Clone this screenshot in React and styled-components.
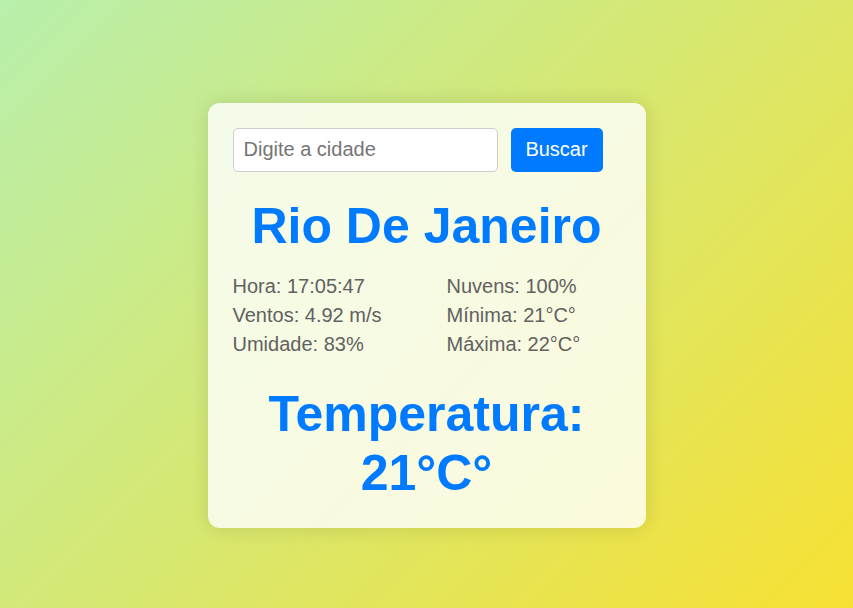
import React, { useState } from "react";
import styled, { createGlobalStyle } from "styled-components";

const GlobalStyle = createGlobalStyle`
  html, body { margin: 0; padding: 0; }
  body {
    font-family: "Liberation Sans", Arial, sans-serif;
    background: linear-gradient(135deg, #b8efac 0%, #f7e033 100%);
    min-height: 100vh;
  }
`;

const Page = styled.div`
  min-height: 100vh;
  box-sizing: border-box;
  display: flex;
  justify-content: center;
  align-items: center;
  padding-top: 22px;
`;

const Card = styled.div`
  width: 438px;
  box-sizing: border-box;
  padding: 25px;
  background: rgba(255, 255, 255, 0.8);
  border-radius: 12px;
  box-shadow: 0 0 20px rgba(0, 0, 0, 0.12);
`;

const SearchRow = styled.div`
  display: flex;
  gap: 13px;
`;

const Input = styled.input`
  width: 265px;
  height: 44px;
  box-sizing: border-box;
  border: 1px solid #ccc;
  border-radius: 5px;
  padding: 0 10px;
  font-family: inherit;
  font-size: 20px;
  color: #333;
  background: #fff;
  outline: none;
  &::placeholder { color: #757575; }
`;

const Button = styled.button`
  height: 44px;
  width: 92px;
  border: none;
  border-radius: 5px;
  background: #007bff;
  color: #fff;
  font-family: inherit;
  font-size: 20px;
  cursor: pointer;
`;

const City = styled.h1`
  margin: 26px 0 18px;
  text-align: center;
  color: #007bff;
  font-size: 50px;
  font-weight: bold;
  line-height: 56px;
`;

const Details = styled.div`
  display: grid;
  grid-template-columns: 214px 1fr;
  grid-auto-flow: column;
  grid-template-rows: repeat(3, 29px);
`;

const Detail = styled.p`
  margin: 0;
  font-size: 20px;
  line-height: 29px;
  color: #616161;
`;

const Temp = styled.h2`
  margin: 26px 0 0;
  text-align: center;
  color: #007bff;
  font-size: 50px;
  font-weight: bold;
  line-height: 59px;
`;

export default function App() {
  const [city, setCity] = useState("");
  const left = ["Hora: 17:05:47", "Ventos: 4.92 m/s", "Umidade: 83%"];
  const right = ["Nuvens: 100%", "Mínima: 21°C°", "Máxima: 22°C°"];
  return (
    <>
      <GlobalStyle />
      <Page>
        <Card>
          <SearchRow>
            <Input
              placeholder="Digite a cidade"
              value={city}
              onChange={(e) => setCity(e.target.value)}
            />
            <Button>Buscar</Button>
          </SearchRow>
          <City>Rio De Janeiro</City>
          <Details>
            {[...left, ...right].map((t) => (
              <Detail key={t}>{t}</Detail>
            ))}
          </Details>
          <Temp>
            Temperatura:
            <br />
            21°C°
          </Temp>
        </Card>
      </Page>
    </>
  );
}
